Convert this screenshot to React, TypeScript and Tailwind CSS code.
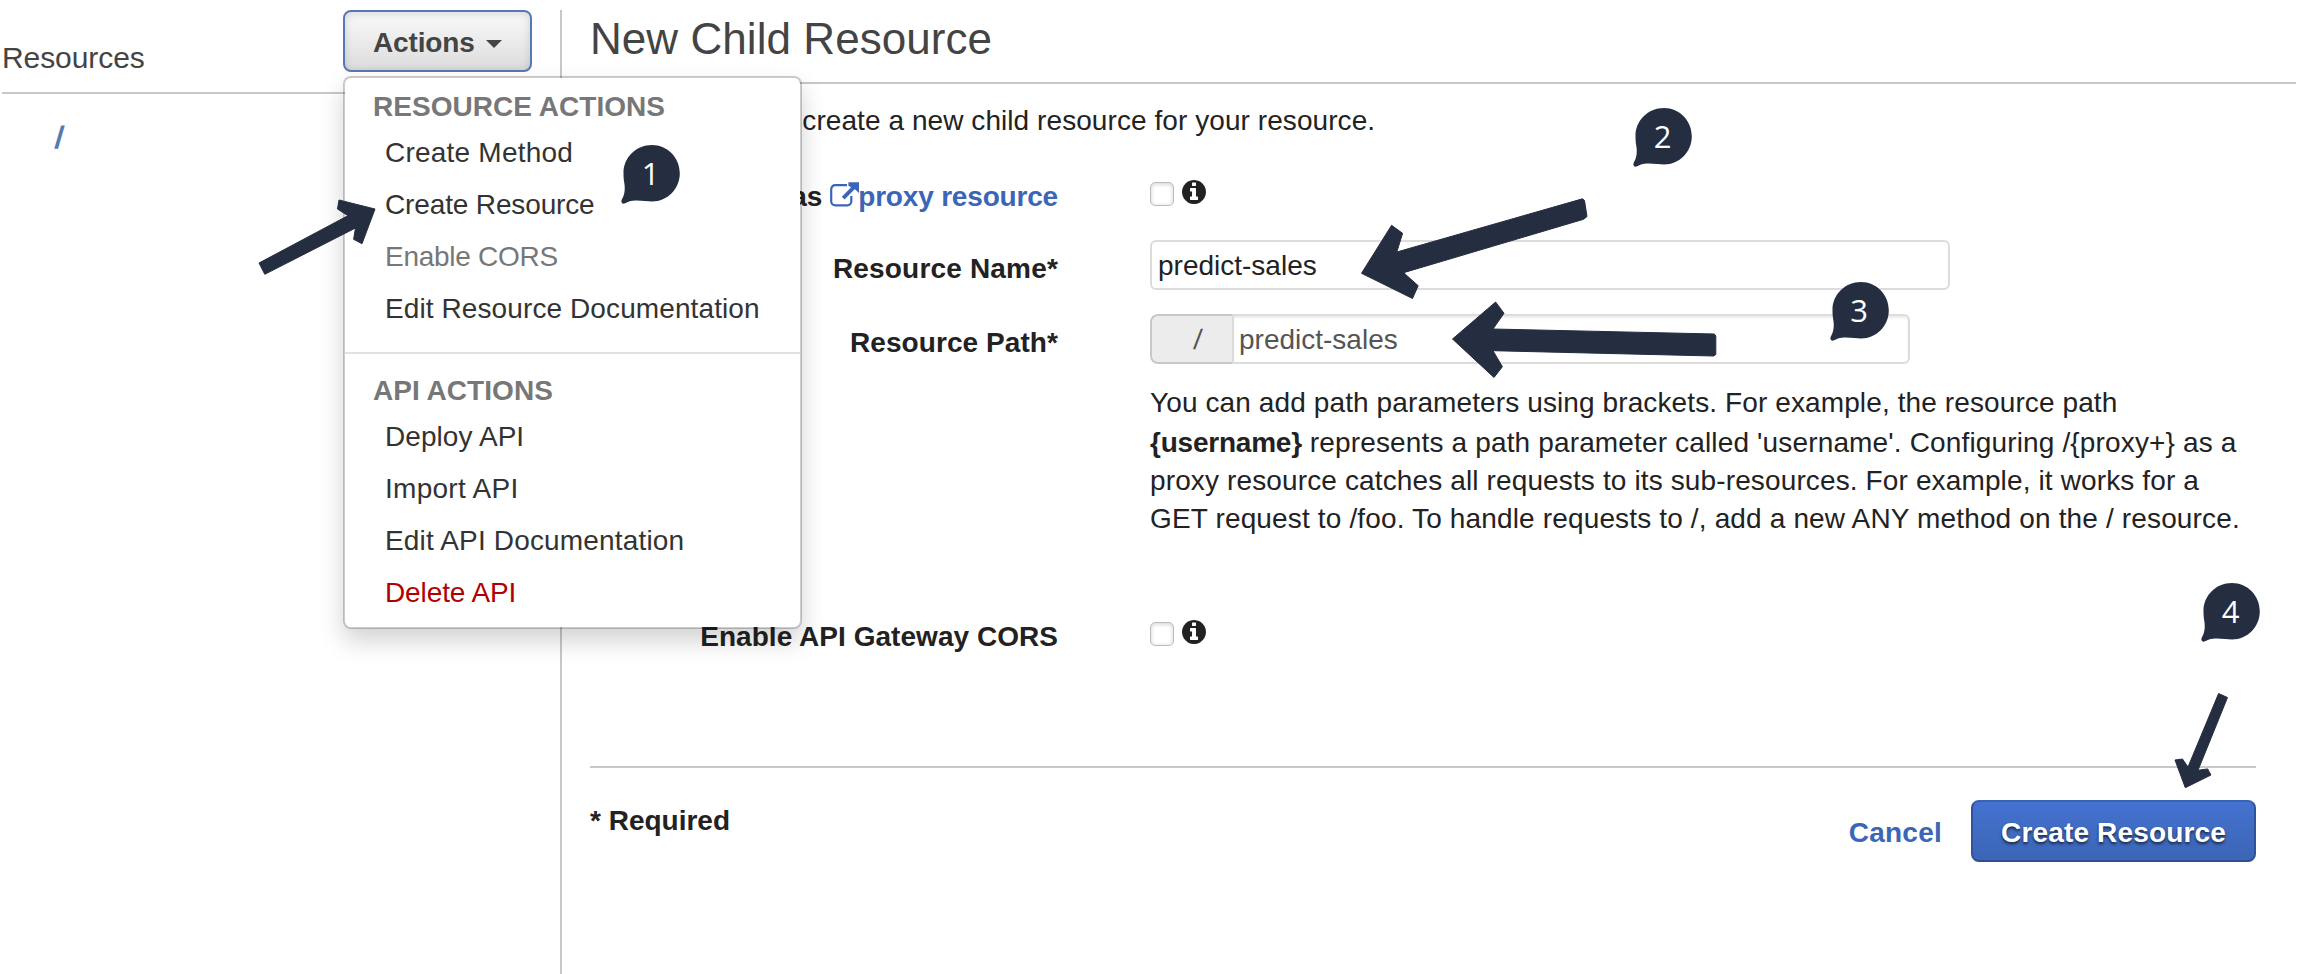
type Item = { label: string; className: string };

const resourceActions: Item[] = [
  { label: "Create Method", className: "tracking-[0.22px] text-[#333]" },
  { label: "Create Resource", className: "tracking-[-0.14px] text-[#333]" },
  { label: "Enable CORS", className: "tracking-[-0.27px] text-[#777]" },
  { label: "Edit Resource Documentation", className: "tracking-[0.1px] text-[#333]" },
];

const apiActions: Item[] = [
  { label: "Deploy API", className: "tracking-[0.07px] text-[#333]" },
  { label: "Import API", className: "tracking-[0.28px] text-[#333]" },
  { label: "Edit API Documentation", className: "tracking-[0.16px] text-[#333]" },
  { label: "Delete API", className: "tracking-[-0.1px] text-[#b00000]" },
];

const bubbles = [
  { n: 1, x: 621, y: 145, tx: 29.5 },
  { n: 2, x: 1633, y: 108, tx: 29.5 },
  { n: 3, x: 1830, y: 282, tx: 29 },
  { n: 4, x: 2201, y: 583, tx: 29.5 },
];

const arrows = [
  "259,263 347.9,215.7 337.5,209 339,200 375,209 362,243.7 353.6,239.3 355.5,228 264.8,274.3",
  "1582.5,198.8 1584.5,200.5 1587,216.5 1583.5,219.3 1403.6,272.7 1418.2,285.7 1412.5,298.5 1361.5,273.3 1391.6,225.3 1402.6,233.3 1396.8,252",
  "1452.5,339 1495.6,302 1504,313.3 1493,329 1714.3,334 1715.8,336 1715.8,354.5 1713.7,356 1493,350.7 1502.4,366.7 1494,377.5",
  "2218.6,693.5 2227.5,697.5 2198,770.3 2207.6,768.9 2211,775 2185.3,787.7 2175,760 2182.5,759 2188,767",
];

function MenuGroup({ title, items }: { title: string; items: Item[] }) {
  return (
    <div>
      <div className="h-10 pl-7 font-bold leading-[41px] tracking-[0.04px] text-[#777]">{title}</div>
      {items.map((item) => (
        <div key={item.label} className={`h-[52px] pl-10 pt-px leading-[51px] ${item.className}`}>
          {item.label}
        </div>
      ))}
    </div>
  );
}

function ActionsMenu() {
  return (
    <div className="absolute left-[343px] top-[76px] h-[553px] w-[459px] whitespace-nowrap rounded-[8px] border-2 border-black/20 bg-white bg-clip-padding pt-2 shadow-[0_12px_24px_rgba(0,0,0,0.175)]">
      <MenuGroup title="RESOURCE ACTIONS" items={resourceActions} />
      <div className="mb-4 mt-[18px] h-0.5 bg-[#e2e2e2]" />
      <MenuGroup title="API ACTIONS" items={apiActions} />
    </div>
  );
}

function ExternalLinkIcon() {
  return (
    <svg width="29" height="26" viewBox="0 0 29 26" className="mt-[5px] shrink-0">
      <path
        d="M17 4.2H5.2a4 4 0 0 0-4 4v12.1a4 4 0 0 0 4 4h12.1a4 4 0 0 0 4-4V15"
        fill="none"
        stroke="#3b66b8"
        strokeWidth="2.2"
      />
      <path d="M13.2 17.2 25 5.2" stroke="#3b66b8" strokeWidth="3.8" />
      <path d="M18.4 1.3H29v10.6l-3.4-3.2-7.2-4z" fill="#3b66b8" />
    </svg>
  );
}

function InfoIcon() {
  return (
    <svg width="24" height="24" viewBox="0 128 1536 1536" fill="#222">
      <path d="M1024 1376v-160q0-14-9-23t-23-9h-96v-512q0-14-9-23t-23-9h-320q-14 0-23 9t-9 23v160q0 14 9 23t23 9h96v320h-96q-14 0-23 9t-9 23v160q0 14 9 23t23 9h448q14 0 23-9t9-23zm-128-896v-160q0-14-9-23t-23-9h-192q-14 0-23 9t-9 23v160q0 14 9 23t23 9h192q14 0 23-9t9-23zm640 416q0 209-103 385.5t-279.5 279.5-385.5 103-385.5-103-279.5-279.5-103-385.5 103-385.5 279.5-279.5 385.5-103 385.5 103 279.5 279.5 103 385.5z" />
    </svg>
  );
}

function CheckboxWithInfo() {
  return (
    <div className="flex h-[26px] gap-2">
      <span className="mt-0.5 h-6 w-6 rounded-[5px] border border-[#bdbdbd] bg-white shadow-[inset_0_1px_4px_rgba(0,0,0,0.2)]" />
      <InfoIcon />
    </div>
  );
}

export default function App() {
  return (
    <div className="relative flex h-[974px] w-[2318px] overflow-hidden bg-white font-['Liberation_Sans',Arial,sans-serif] text-[28px] text-[#222]">
      <aside className="w-[560px] shrink-0">
        <div className="ml-0.5 flex h-[94px] items-start border-b-2 border-[#c8c8c8]">
          <h2 className="mt-[37px] w-[341px] text-[30px] leading-[41px] tracking-[-0.08px] text-[#444]">Resources</h2>
          <button className="mt-2.5 flex h-[62px] w-[189px] items-start rounded-[8px] border-2 border-[#5679b3] bg-linear-to-b from-[#fafafa] to-[#dcdcdc] pl-7 pt-0.5 font-bold leading-[57px] tracking-[-0.15px] text-[#444] shadow-[inset_0_2px_8px_rgba(0,0,0,0.14)]">
            Actions
            <svg width="16" height="8" viewBox="0 0 16 8" className="ml-[11px] mt-[26px]">
              <path d="M0 0H16L8 8Z" fill="#444" />
            </svg>
          </button>
        </div>
        <div className="mt-[23px] pl-[55px] text-[31px] font-bold leading-[41px] text-[#5679b3]">
          <span className="inline-block -skew-x-6">/</span>
        </div>
      </aside>

      <main className="mt-2.5 flex-1 border-l-2 border-[#c8c8c8]">
        <h1 className="ml-7 h-[72px] pt-1 text-[44px] leading-[49px] tracking-[0.06px] text-[#444]">
          New Child Resource
        </h1>
        <div className="ml-7 h-0.5 w-[1706px] bg-[#c8c8c8]" />
        <p className="ml-7 mt-4 h-[76px] pl-px leading-[41px] tracking-[0.07px]">
          Use this page to create a new child resource for your resource.
        </p>

        <div className="ml-7 w-[1666px]">
          <div className="flex h-16 gap-[92px]">
            <div className="flex w-[468px] justify-end whitespace-pre font-bold leading-[41px]">
              Configure as{" "}
              <a className="flex tracking-[-0.18px] text-[#3b66b8]">
                <ExternalLinkIcon />
                <span className="-ml-px">proxy resource</span>
              </a>
            </div>
            <div className="pt-1">
              <CheckboxWithInfo />
            </div>
          </div>

          <div className="flex h-[74px] gap-[92px]">
            <label className="w-[468px] pt-2 text-right font-bold leading-[41px] tracking-[0.18px]">Resource Name*</label>
            <input
              readOnly
              value="predict-sales"
              className="h-[50px] w-[800px] rounded-[6px] border-2 border-[#dcdcdc] bg-white pl-[6px] pt-px leading-[45px] text-[#222]"
            />
          </div>

          <div className="flex h-[68px] gap-[92px]">
            <label className="w-[468px] pt-2 text-right font-bold leading-[41px] tracking-[0.07px]">Resource Path*</label>
            <div className="flex h-[50px] w-[760px]">
              <span className="w-[82px] rounded-l-[8px] border-y-2 border-l-2 border-[#c8c8c8] bg-[#ececec] pl-[42px] pt-px leading-[45px] text-[#555]">
                <span className="inline-block -skew-x-6">/</span>
              </span>
              <input
                readOnly
                value="predict-sales"
                className="h-[50px] w-[678px] rounded-r-[6px] border-2 border-[#dcdcdc] bg-white pl-[5px] pt-px leading-[45px] text-[#555] shadow-[inset_0_2px_2px_rgba(0,0,0,0.075)]"
              />
            </div>
          </div>

          <div className="ml-[560px] h-[234px] whitespace-nowrap">
            <div className="h-10 leading-[41px] tracking-[0.11px]">
              You can add path parameters using brackets. For example, the resource path
            </div>
            <div className="h-10 leading-[41px] tracking-[0.15px]">
              <b className="tracking-[-0.22px]">{"{username}"}</b>
              {" represents a path parameter called 'username'. Configuring /{proxy+} as a"}
            </div>
            <div className="h-[38px] leading-[37px] tracking-[0.13px]">
              proxy resource catches all requests to its sub-resources. For example, it works for a
            </div>
            <div className="h-[38px] leading-[37px] tracking-[0.15px]">
              GET request to /foo. To handle requests to /, add a new ANY method on the / resource.
            </div>
          </div>

          <div className="flex h-[150px] gap-[92px]">
            <div className="w-[468px] text-right font-bold leading-[41px] tracking-[0.04px]">Enable API Gateway CORS</div>
            <div className="pt-1">
              <CheckboxWithInfo />
            </div>
          </div>

          <div className="flex items-start border-t-2 border-[#c8c8c8] pt-8 font-bold">
            <span className="leading-[41px]">* Required</span>
            <a className="ml-auto mr-[29px] pt-1 leading-[57px] tracking-[0.25px] text-[#3b66b8]">Cancel</a>
            <button className="h-[62px] w-[285px] rounded-[8px] border-2 border-b-[#2c4f93] border-l-[#2f5499] border-r-[#2f5499] border-t-[#3862b3] bg-linear-to-b from-[#4472d0] to-[#3c65b5] pt-0.5 leading-[57px] tracking-[0.15px] text-white [text-shadow:0_2px_3px_rgba(0,0,0,0.65)]">
              Create Resource
            </button>
          </div>
        </div>
      </main>

      <ActionsMenu />

      <svg width="2318" height="974" viewBox="0 0 2318 974" className="pointer-events-none absolute left-0 top-0">
        {arrows.map((points) => (
          <polygon key={points} points={points} fill="#252d40" stroke="#252d40" strokeWidth="1" strokeLinejoin="round" />
        ))}
        {bubbles.map((b) => (
          <g key={b.n} transform={`translate(${b.x} ${b.y})`}>
            <path
              d="M31 0C46.5 0 58.8 12.5 58.8 28.3C58.8 44 46.5 56.5 31 56.5C25 56.5 15 54.3 8 56.6L3.5 58.6C1.3 59.2-.3 57.2.6 55C3.5 50 4.4 45 3.3 38C2.7 35 2.5 31 2.5 28C2.5 12.5 15 0 31 0Z"
              fill="#252d40"
            />
            <text x={b.tx} y="40" textAnchor="middle" fill="#fff" className="font-['Open_Sans',sans-serif] text-[31px]">
              {b.n}
            </text>
          </g>
        ))}
      </svg>
    </div>
  );
}
